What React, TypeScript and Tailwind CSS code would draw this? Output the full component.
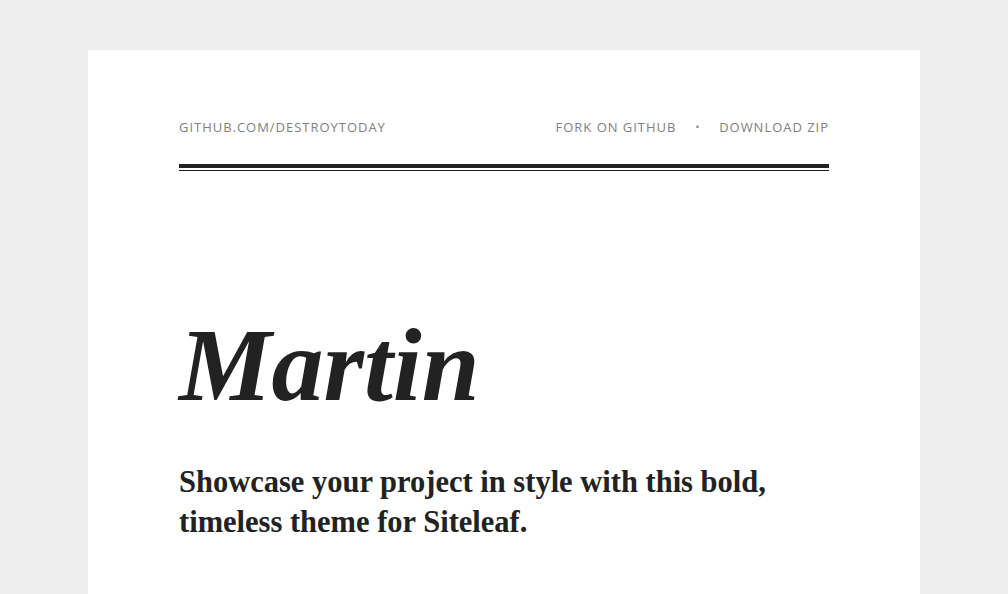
export default function App() {
  return (
    <div className="h-[594px] overflow-hidden bg-[#eeeeee] px-[88px] pt-[50px]">
      <div className="h-[544px] bg-white px-[91px] pt-[68px]">
        {/* header */}
        <div className="flex items-center justify-between pb-[26px] text-[13px] uppercase tracking-[0.075em] text-[#808080] [font-family:'Open_Sans',sans-serif]">
          <a>github.com/destroytoday</a>
          <div className="flex items-center gap-[19px]">
            <a>Fork on GitHub</a>
            <span className="text-[10px] text-[#6a7a90]">•</span>
            <a>Download ZIP</a>
          </div>
        </div>
        <div className="h-[7px] border-t-4 border-b border-[#222222]" />

        {/* hero */}
        <h1 className="mt-[142px] text-[104px] leading-none font-bold italic text-[#222222] [font-family:'Liberation_Serif',serif]">
          Martin
        </h1>
        <p className="mt-[45px] w-[640px] text-[30.5px] leading-[40px] font-bold text-[#222222] [font-family:'Liberation_Serif',serif]">
          Showcase your project in style with this bold, timeless theme for Siteleaf.
        </p>
      </div>
    </div>
  );
}
